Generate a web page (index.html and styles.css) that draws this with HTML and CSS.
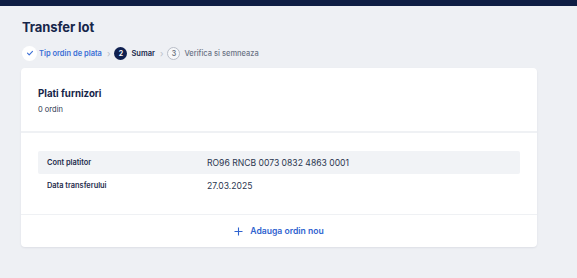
FILE: index.html
```html
<!DOCTYPE html>
<html>
<head>
<meta charset="utf-8">
<link rel="stylesheet" href="styles.css">
</head>
<body>
<div class="topbar"></div>
<main class="page">
  <h1 class="title">Transfer lot</h1>
  <nav class="steps">
    <span class="step done">
      <span class="dot dot-done"><svg width="8" height="8" viewBox="0 0 8 8"><path d="M1.5 4.2 L3.2 5.8 L6.5 2.3" fill="none" stroke="#3b6fd6" stroke-width="1.1" stroke-linecap="round" stroke-linejoin="round"/></svg></span>
      <span class="label label-done">Tip ordin de plata</span>
    </span>
    <span class="chev">›</span>
    <span class="step">
      <span class="dot dot-active">2</span>
      <span class="label label-active">Sumar</span>
    </span>
    <span class="chev">›</span>
    <span class="step">
      <span class="dot dot-next">3</span>
      <span class="label label-next">Verifica si semneaza</span>
    </span>
  </nav>
  <section class="card">
    <header class="card-head">
      <h2 class="card-title">Plati furnizori</h2>
      <div class="card-sub">0 ordin</div>
    </header>
    <div class="card-body">
      <div class="row shaded">
        <span class="key">Cont platitor</span>
        <span class="val">RO96 RNCB 0073 0832 4863 0001</span>
      </div>
      <div class="row">
        <span class="key">Data transferului</span>
        <span class="val">27.03.2025</span>
      </div>
    </div>
    <footer class="card-foot">
      <button class="add"><svg width="9" height="9" viewBox="0 0 9 9"><path d="M4.5 0.5 V8.5 M0.5 4.5 H8.5" stroke="#2f63cf" stroke-width="1.1" fill="none"/></svg><span>Adauga ordin nou</span></button>
    </footer>
  </section>
</main>
</body>
</html>
```

FILE: styles.css
```css
* { box-sizing: border-box; }
html, body { margin: 0; padding: 0; }
body {
  background: #eef0f4;
  font-family: Inter, "Noto Sans", sans-serif;
  color: #16264a;
  width: 577px;
  height: 278px;
  overflow: hidden;
}
.topbar { height: 6px; background: #0e1d44; }
.page { padding: 0 40px 0 21px; }
.title {
  margin: 13px 0 0 1px;
  font-size: 13px;
  font-weight: 700;
  line-height: 17px;
  color: #16264a;
  letter-spacing: -0.1px;
}
.steps {
  display: flex;
  align-items: center;
  margin-top: 9px;
  height: 16px;
  font-size: 7.5px;
}
.step { display: flex; align-items: center; gap: 4px; }
.dot {
  width: 13px; height: 13px; border-radius: 50%;
  display: flex; align-items: center; justify-content: center;
  font-size: 7px; font-weight: 700;
}
.dot-done { background: #ffffff; width: 15px; height: 15px; margin-left: 1px; }
.step.done { gap: 2px; }
.dot-active { background: #0f2050; color: #fff; }
.dot-next { border: 1px solid #b9bec8; color: #6b7280; font-weight: 600; background: #f7f8fa; }
.label { font-weight: 600; }
.label-done { color: #3b6fd6; }
.label-active { color: #16264a; }
.label-next { color: #6b7385; font-weight: 500; }
.chev { color: #b9bec8; font-size: 9px; margin: 0 4px 0 5px; }
.card {
  margin-top: 7px;
  width: 516px;
  background: #fff;
  border-radius: 4px;
  box-shadow: 0 1px 2px rgba(20, 30, 60, 0.08);
}
.card-head {
  padding: 20px 17px 16px;
  border-bottom: 2px solid #eff1f4;
}
.card-title { margin: 0; font-size: 9.7px; font-weight: 700; line-height: 12px; color: #16264a; }
.card-sub { margin-top: 5px; font-size: 7.5px; line-height: 10px; color: #2b3650; }
.card-body { padding: 18px 17px 17px; border-bottom: 1px solid #eff1f4; }
.row {
  display: grid;
  grid-template-columns: 160px 1fr;
  align-items: center;
  height: 23px;
  padding-left: 9px;
  font-size: 7.4px;
  border-radius: 2px;
}
.row.shaded { background: #f1f3f6; }
.key { font-weight: 600; color: #1f2d4d; }
.val { color: #2b3650; font-size: 8.6px; }
.card-foot { display: flex; justify-content: center; align-items: center; height: 32px; }
.add {
  display: flex; align-items: center; gap: 7px;
  border: 0; background: none; padding: 0;
  font-family: inherit; font-size: 8.6px; font-weight: 600; color: #2f63cf;
}
```
